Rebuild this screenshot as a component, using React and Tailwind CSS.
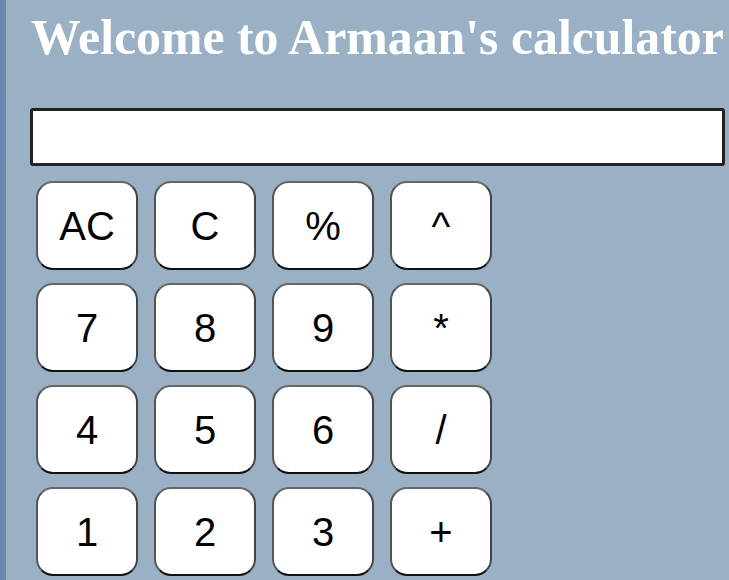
import React from "react";

const rows = [
  ["AC", "C", "%", "^"],
  ["7", "8", "9", "*"],
  ["4", "5", "6", "/"],
  ["1", "2", "3", "+"],
];

export default function App() {
  return (
    <div className="flex min-h-[580px] w-full bg-[#9ab0c5] overflow-hidden">
      <div className="w-[6px] shrink-0 bg-[#6f86ad]" />
      <div className="flex flex-col pl-[24px]">
        <h1
          className="mt-[10px] ml-[1px] whitespace-nowrap text-[49.8px] leading-[56px] font-bold text-white"
          style={{ fontFamily: '"Liberation Serif", "Times New Roman", serif' }}
        >
          Welcome to Armaan's calculator
        </h1>
        <input
          type="text"
          className="mt-[42px] h-[58px] w-[695px] rounded-[3px] border-[3px] border-[#222] bg-white outline-none"
        />
        <div className="mt-[15px] ml-[6px] grid grid-cols-[repeat(4,102px)] gap-x-[16px] gap-y-[13px]">
          {rows.flat().map((k) => (
            <button
              key={k}
              className="flex h-[89px] w-[102px] items-center justify-center rounded-[17px] border-2 border-t-[#666] border-l-[#555] border-r-[#444] border-b-[#111] bg-white text-[40px] text-black"
              style={{ fontFamily: '"Liberation Sans", Arial, sans-serif' }}
            >
              {k}
            </button>
          ))}
        </div>
      </div>
    </div>
  );
}
